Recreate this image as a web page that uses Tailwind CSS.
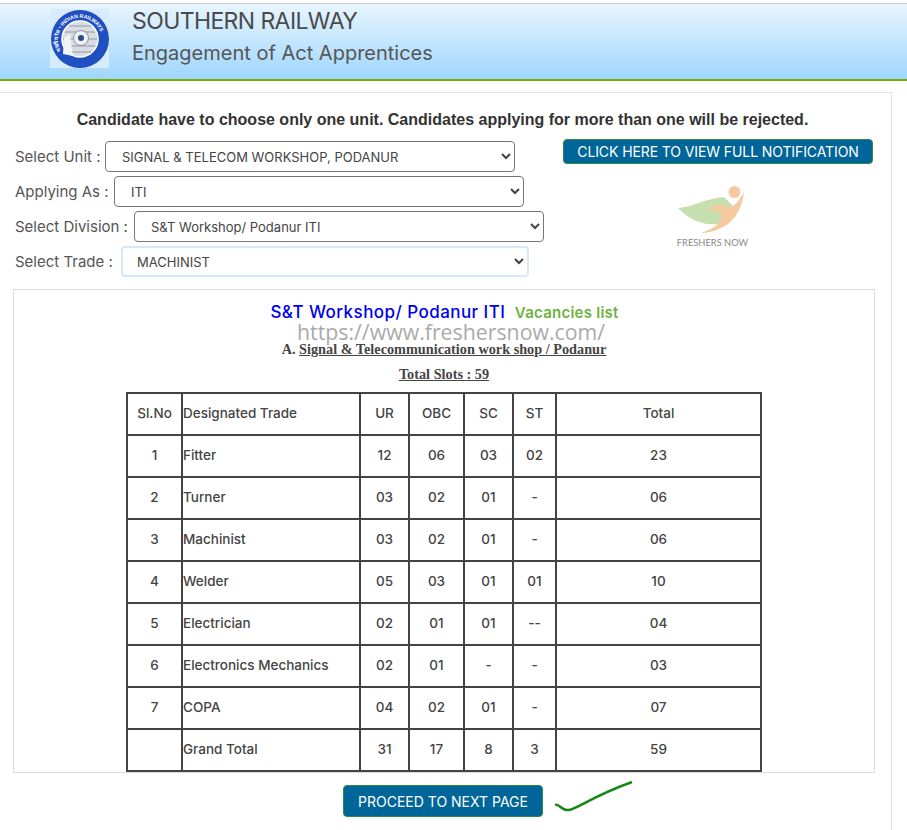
<!DOCTYPE html>
<html lang="en">
<head>
  <meta charset="UTF-8">
  <title>Southern Railway - Engagement of Act Apprentices</title>
  <script src="https://cdn.jsdelivr.net/npm/@tailwindcss/browser@4"></script>
</head>
<body class="bg-white w-[907px] h-[830px] overflow-hidden font-['Inter','Noto_Sans',sans-serif] text-[#444]">

  <!-- header -->
  <div class="mt-[3px] h-[78px] border-t border-t-[#ccc] border-b-2 border-b-[#77aa00] bg-gradient-to-b from-[#e8f5ff] to-[#9fd6fd] flex">
    <div class="ml-[50px] mt-[5px] w-[59px] h-[59px] bg-[#d6ebfc] flex items-center justify-center">
      <svg width="58" height="58" viewBox="0 0 58 58">
        <defs><path id="ring" d="M10 41 A22 22 0 1 1 48 41"/></defs>
        <circle cx="29" cy="29" r="29" fill="#1f4fc0"/>
        <circle cx="29" cy="29" r="18" fill="#d9dde2"/>
        <circle cx="29" cy="29" r="18" fill="none" stroke="#fff" stroke-width="1.5"/>
        <path d="M12 29h34M14 22h30M14 36h30M18 16h22M18 42h22" stroke="#a9b0b8" stroke-width="1.5"/>
        <path d="M12 44 L13 28 L19 24 L22 46Z" fill="#f2f3f5"/>
        <circle cx="30" cy="28" r="7.500" fill="#eef0f2" stroke="#8a94a6" stroke-width="1"/>
        <circle cx="30" cy="28" r="3" fill="#2b4a90"/>
        <text font-size="5.200" font-weight="700" fill="#fff" font-family="Liberation Sans, sans-serif"><textPath href="#ring">भारतीय रेल • INDIAN RAILWAYS</textPath></text>
      </svg>
    </div>
    <div class="ml-[23px]">
      <div class="text-[23px] leading-[30px] mt-[2px] text-[#4a4a4a] tracking-[-0.6px]">SOUTHERN RAILWAY</div>
      <div class="text-[20px] leading-[26px] mt-[4px] text-[#555]">Engagement of Act Apprentices</div>
    </div>
  </div>

  <!-- card -->
  <div class="mt-[11px] w-[892px] border-t border-r border-[#e2e2e2] h-[760px] pt-[17px]">
    <p class="text-center font-['Liberation_Sans',sans-serif] font-bold text-[16px] leading-[20px] pr-[6px] text-[#333]">Candidate have to choose only one unit. Candidates applying for more than one will be rejected.</p>

    <div class="flex mt-[9px] h-[150px]">
      <div class="pl-[15px] w-[563px] pt-[2px] flex flex-col text-[15px] text-[#555]">
        <div class="flex items-center h-[31px]">
          <label class="w-[90px] pt-[2px]">Select Unit :</label>
          <select class="w-[410px] h-[31px] rounded border border-[#767676] bg-white pl-[12px] text-[13px] text-[#444]"><option>SIGNAL &amp; TELECOM WORKSHOP, PODANUR</option></select>
        </div>
        <div class="flex items-center h-[31px] mt-[4px]">
          <label class="w-[99px] pt-[2px]">Applying As :</label>
          <select class="w-[410px] h-[31px] rounded border border-[#767676] bg-white pl-[12px] text-[13px] text-[#444]"><option>ITI</option></select>
        </div>
        <div class="flex items-center h-[31px] mt-[4px]">
          <label class="w-[119px] pt-[2px]">Select Division :</label>
          <select class="w-[410px] h-[31px] rounded border border-[#767676] bg-white pl-[12px] text-[13px] text-[#444]"><option>S&amp;T Workshop/ Podanur ITI</option></select>
        </div>
        <div class="flex items-center h-[31px] mt-[4px]">
          <label class="w-[106px] pt-[2px]">Select Trade :</label>
          <select class="w-[408px] h-[31px] rounded border-2 border-[#d3e9fb] bg-white pl-[10px] text-[13px] text-[#444]"><option>MACHINIST</option></select>
        </div>
      </div>
      <div class="w-[310px]">
        <a class="block h-[25px] leading-[23px] rounded bg-[#006699] border border-[#2e8b3d] text-white text-center text-[14px] tracking-[-0.1px]">CLICK HERE TO VIEW FULL NOTIFICATION</a>
        <div class="ml-[114px] mt-[21px] w-[72px]">
          <svg width="70" height="48" viewBox="0 0 70 48" class="block">
            <path d="M1 23C16 22 26 14 47 12L57 22C54 30 47 37 41 39C24 41 10 33 1 23Z" fill="#c5e0ae"/>
            <circle cx="57.500" cy="7" r="6" fill="#f7c9a0"/>
            <path d="M24 48C36 44 46 38 44 30C42 24 34 26 30 24C38 19 48 19 53 23C58 20 64 14 67 6C66 22 58 36 46 42C38 46 30 48 24 48Z" fill="#f7c9a0"/>
          </svg>
          <div class="text-[9.3px] leading-[12px] text-[#888] whitespace-nowrap text-center font-['Lato',sans-serif] mt-[4px] -ml-[1px]">FRESHERS NOW</div>
        </div>
      </div>
    </div>

    <!-- vacancies -->
    <div class="ml-[13px] w-[862px] h-[484px] border border-[#ddd] text-center relative">
      <div class="mt-[10px] pl-[1px] h-[24px] leading-[24px]">
        <span class="text-[17px] font-medium text-[#0000ee] tracking-[0.45px]">S&amp;T Workshop/ Podanur ITI</span>
        <span class="ml-[5px] text-[15px] font-semibold text-[#6cb33f] tracking-[0.25px]">Vacancies list</span>
      </div>
      <div class="absolute left-[283px] top-[27px] font-['Open_Sans',sans-serif] text-[21.3px] leading-[30px] text-[#aaa]">https://www.freshersnow.com/</div>
      <p class="mt-[17px] font-['Liberation_Serif',serif] font-bold text-[14.25px] leading-[16px] text-[#444] relative">A. <u>Signal &amp; Telecommunication work shop / Podanur</u></p>
      <p class="mt-[9px] font-['Liberation_Serif',serif] font-bold text-[14.25px] leading-[16px] text-[#444]"><u>Total Slots : 59</u></p>
      <table class="mt-[10px] ml-[112px] w-[634px] table-fixed border-collapse text-[13.5px] text-[#444] font-medium">
        <colgroup>
          <col class="w-[55px]"><col class="w-[178px]"><col class="w-[49px]"><col class="w-[55px]"><col class="w-[49px]"><col class="w-[43px]"><col class="w-[205px]">
        </colgroup>
        <tbody class="[&_td]:border-2 [&_td]:border-[#444] [&_td]:h-[42px] [&_td]:p-0 [&_td]:pb-[2px] [&_td:nth-child(2)]:text-left">
          <tr><td>Sl.No</td><td>Designated Trade</td><td>UR</td><td>OBC</td><td>SC</td><td>ST</td><td>Total</td></tr>
          <tr><td>1</td><td>Fitter</td><td>12</td><td>06</td><td>03</td><td>02</td><td>23</td></tr>
          <tr><td>2</td><td>Turner</td><td>03</td><td>02</td><td>01</td><td>-</td><td>06</td></tr>
          <tr><td>3</td><td>Machinist</td><td>03</td><td>02</td><td>01</td><td>-</td><td>06</td></tr>
          <tr><td>4</td><td>Welder</td><td>05</td><td>03</td><td>01</td><td>01</td><td>10</td></tr>
          <tr><td>5</td><td>Electrician</td><td>02</td><td>01</td><td>01</td><td>--</td><td>04</td></tr>
          <tr><td>6</td><td>Electronics Mechanics</td><td>02</td><td>01</td><td>-</td><td>-</td><td>03</td></tr>
          <tr><td>7</td><td>COPA</td><td>04</td><td>02</td><td>01</td><td>-</td><td>07</td></tr>
          <tr><td></td><td>Grand Total</td><td>31</td><td>17</td><td>8</td><td>3</td><td>59</td></tr>
        </tbody>
      </table>
    </div>

    <div class="flex mt-[12px] ml-[343px] relative">
      <a class="block w-[200px] h-[32px] leading-[31px] rounded bg-[#006699] border border-[#2e8b3d] text-white text-center text-[14px]">PROCEED TO NEXT PAGE</a>
      <svg class="absolute left-[211px] -top-[4px]" width="80" height="36" viewBox="0 0 80 36" fill="none">
        <path d="M1 24C5 22 8 30 14 29C22 29 36 16 78 1" stroke="#118811" stroke-width="2.500"/>
      </svg>
    </div>
  </div>
</body>
</html>
